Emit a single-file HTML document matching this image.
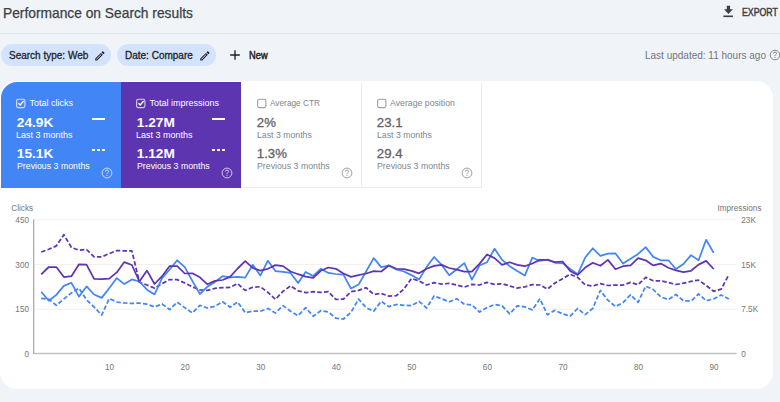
<!DOCTYPE html>
<html><head><meta charset="utf-8"><style>
*{margin:0;padding:0;box-sizing:border-box}
html,body{width:780px;height:402px;overflow:hidden;background:#f0f4f9;font-family:"Liberation Sans",sans-serif;position:relative}
.a{position:absolute;white-space:nowrap;line-height:1}
#card{position:absolute;left:0;top:81px;width:773px;height:308px;background:#fff;border-radius:17px;overflow:hidden}
.tile{position:absolute;top:82px;height:105px}
.lbl{font-size:9px}
.big{font-size:13.4px;font-weight:bold}
.sub{font-size:9px}
</style></head><body>
<div class="a " style="left:3.2px;top:6.5px;font-size:13.9px;color:#3c4043;-webkit-text-stroke:0.25px #3c4043;transform:scaleX(0.992);transform-origin:0 0">Performance on Search results</div>
<div class="a" style="left:0;top:33px;width:780px;height:1px;background:#e2e6ea"></div>
<div class="a" style="left:1px;top:44px;width:110px;height:22px;border-radius:11px;background:#d3e3fd"></div>
<div class="a" style="left:117px;top:44px;width:99px;height:22px;border-radius:11px;background:#d3e3fd"></div>
<div class="a " style="left:9px;top:51px;font-size:10px;color:#1f1f1f;-webkit-text-stroke:0.3px #1f1f1f">Search type: Web</div>
<div class="a " style="left:125px;top:51px;font-size:10px;color:#1f1f1f;-webkit-text-stroke:0.3px #1f1f1f">Date: Compare</div>
<svg class="a" style="left:94.7px;top:50.6px" width="10" height="10" viewBox="2.5 2.5 19.5 19.5"><path d="M3 17.25V21h3.75L17.81 9.94l-3.75-3.75L3 17.25zM5.92 19H5v-.92l9.06-9.06.92.92L5.92 19zM20.71 5.63l-2.34-2.34c-.2-.2-.45-.29-.71-.29s-.51.1-.7.29l-1.83 1.83 3.75 3.75 1.83-1.83c.39-.39.39-1.02 0-1.41z" fill="#1f1f1f"/></svg>
<svg class="a" style="left:199.7px;top:50.6px" width="10" height="10" viewBox="2.5 2.5 19.5 19.5"><path d="M3 17.25V21h3.75L17.81 9.94l-3.75-3.75L3 17.25zM5.92 19H5v-.92l9.06-9.06.92.92L5.92 19zM20.71 5.63l-2.34-2.34c-.2-.2-.45-.29-.71-.29s-.51.1-.7.29l-1.83 1.83 3.75 3.75 1.83-1.83c.39-.39.39-1.02 0-1.41z" fill="#1f1f1f"/></svg>
<svg class="a" style="left:229px;top:49px" width="12" height="12" viewBox="0 0 12 12"><path d="M6 1.2V10.8M1.2 6H10.8" stroke="#1f1f1f" stroke-width="1.35"/></svg>
<div class="a " style="left:248.7px;top:51px;font-size:10px;color:#1f1f1f;-webkit-text-stroke:0.45px #1f1f1f;transform:scaleX(0.93);transform-origin:0 0">New</div>
<svg class="a" style="left:722px;top:5px" width="12" height="13" viewBox="0 0 12 13"><path d="M4.8 0.8H8.1V4.3H10.9L6.45 9L2 4.3H4.8Z" fill="#3c4043"/><rect x="1.4" y="10.5" width="9.5" height="1.6" fill="#3c4043"/></svg>
<div class="a " style="left:741.8px;top:8.2px;font-size:10px;color:#3c4043;-webkit-text-stroke:0.45px #3c4043;transform:scaleX(0.875);transform-origin:0 0">EXPORT</div>
<div class="a " style="left:645.3px;top:50.5px;font-size:10.1px;color:#70757a;transform:scaleX(0.99);transform-origin:0 0">Last updated: 11 hours ago</div>
<svg class="a" style="left:767.7px;top:47.6px" width="14" height="14" viewBox="0 0 14 14"><circle cx="7" cy="7" r="4.8" fill="none" stroke="#80868b" stroke-width="1"/><path d="M5.4 5.6 Q5.4 4.1 7 4.1 Q8.6 4.1 8.6 5.5 Q8.6 6.3 7.6 6.8 Q7 7.2 7 8.2" fill="none" stroke="#80868b" stroke-width="1"/><rect x="6.5" y="9" width="1" height="1" fill="#80868b"/></svg>
<div id="card"></div>
<div class="a" style="left:1px;top:82px;width:120px;height:106px;background:#4285f4;border-top-left-radius:16px;"></div>
<svg class="a" style="left:15px;top:97px" width="12" height="12" viewBox="0 0 12 12"><rect x="1.6" y="2.3" width="8.3" height="8.3" rx="1.6" fill="none" stroke="rgba(255,255,255,0.75)" stroke-width="1.1"/><path d="M3.4 6.3 L5.2 8 L8.6 4" fill="none" stroke="#fff" stroke-width="1.3"/></svg>
<div class="a " style="left:29.5px;top:99px;font-size:9px;color:#fff">Total clicks</div>
<div class="a " style="left:16.8px;top:115.6px;font-size:13.7px;font-weight:bold;color:#fff">24.9K</div>
<div class="a " style="left:16px;top:131px;font-size:9px;color:#fff">Last 3 months</div>
<div class="a " style="left:16.8px;top:146.6px;font-size:13.7px;font-weight:bold;color:#fff">15.1K</div>
<div class="a " style="left:16.5px;top:162px;font-size:9px;color:#fff;transform:scaleX(0.975);transform-origin:0 0">Previous 3 months</div>
<svg class="a" style="left:100.4px;top:166px" width="14" height="14" viewBox="0 0 14 14"><circle cx="7" cy="7" r="4.9" fill="none" stroke="rgba(255,255,255,0.7)" stroke-width="1"/><path d="M5.4 5.6 Q5.4 4.1 7 4.1 Q8.6 4.1 8.6 5.5 Q8.6 6.3 7.6 6.8 Q7 7.2 7 8.2" fill="none" stroke="rgba(255,255,255,0.7)" stroke-width="1"/><rect x="6.5" y="9" width="1" height="1" fill="rgba(255,255,255,0.7)"/></svg>
<div class="a" style="left:92px;top:118px;width:13px;height:2px;background:#fff"></div>
<div class="a" style="left:92.0px;top:149px;width:3px;height:2px;background:#fff"></div>
<div class="a" style="left:96.75px;top:149px;width:3px;height:2px;background:#fff"></div>
<div class="a" style="left:101.5px;top:149px;width:3px;height:2px;background:#fff"></div>
<div class="a" style="left:121px;top:82px;width:120px;height:106px;background:#5e35b1;"></div>
<svg class="a" style="left:135px;top:97px" width="12" height="12" viewBox="0 0 12 12"><rect x="1.6" y="2.3" width="8.3" height="8.3" rx="1.6" fill="none" stroke="rgba(255,255,255,0.75)" stroke-width="1.1"/><path d="M3.4 6.3 L5.2 8 L8.6 4" fill="none" stroke="#fff" stroke-width="1.3"/></svg>
<div class="a " style="left:149.5px;top:99px;font-size:9px;color:#fff">Total impressions</div>
<div class="a " style="left:136.8px;top:115.6px;font-size:13.7px;font-weight:bold;color:#fff">1.27M</div>
<div class="a " style="left:136px;top:131px;font-size:9px;color:#fff">Last 3 months</div>
<div class="a " style="left:136.8px;top:146.6px;font-size:13.7px;font-weight:bold;color:#fff">1.12M</div>
<div class="a " style="left:136.5px;top:162px;font-size:9px;color:#fff;transform:scaleX(0.975);transform-origin:0 0">Previous 3 months</div>
<svg class="a" style="left:220.4px;top:166px" width="14" height="14" viewBox="0 0 14 14"><circle cx="7" cy="7" r="4.9" fill="none" stroke="rgba(255,255,255,0.7)" stroke-width="1"/><path d="M5.4 5.6 Q5.4 4.1 7 4.1 Q8.6 4.1 8.6 5.5 Q8.6 6.3 7.6 6.8 Q7 7.2 7 8.2" fill="none" stroke="rgba(255,255,255,0.7)" stroke-width="1"/><rect x="6.5" y="9" width="1" height="1" fill="rgba(255,255,255,0.7)"/></svg>
<div class="a" style="left:212px;top:118px;width:13px;height:2px;background:#fff"></div>
<div class="a" style="left:212.0px;top:149px;width:3px;height:2px;background:#fff"></div>
<div class="a" style="left:216.75px;top:149px;width:3px;height:2px;background:#fff"></div>
<div class="a" style="left:221.5px;top:149px;width:3px;height:2px;background:#fff"></div>
<div class="a" style="left:241px;top:82px;width:121px;height:106px;border-right:1px solid #ebebeb;border-bottom:1px solid #ebebeb"></div>
<svg class="a" style="left:255.6px;top:97px" width="12" height="12" viewBox="0 0 12 12"><rect x="1.6" y="2.3" width="8.3" height="8.3" rx="1.6" fill="none" stroke="#9aa0a6" stroke-width="1.1"/></svg>
<div class="a " style="left:269.5px;top:99px;font-size:9px;color:#80868b;transform:scaleX(0.92);transform-origin:0 0">Average CTR</div>
<div class="a " style="left:256.8px;top:115.6px;font-size:13.2px;color:#5f6368;-webkit-text-stroke:0.3px #5f6368">2%</div>
<div class="a " style="left:257.2px;top:131px;font-size:9px;color:#80868b;transform:scaleX(0.97);transform-origin:0 0">Last 3 months</div>
<div class="a " style="left:256.8px;top:146.6px;font-size:13.2px;color:#5f6368;-webkit-text-stroke:0.3px #5f6368">1.3%</div>
<div class="a " style="left:256.5px;top:162px;font-size:9px;color:#80868b;transform:scaleX(0.975);transform-origin:0 0">Previous 3 months</div>
<svg class="a" style="left:340.4px;top:166px" width="14" height="14" viewBox="0 0 14 14"><circle cx="7" cy="7" r="4.9" fill="none" stroke="#9aa0a6" stroke-width="1"/><path d="M5.4 5.6 Q5.4 4.1 7 4.1 Q8.6 4.1 8.6 5.5 Q8.6 6.3 7.6 6.8 Q7 7.2 7 8.2" fill="none" stroke="#9aa0a6" stroke-width="1"/><rect x="6.5" y="9" width="1" height="1" fill="#9aa0a6"/></svg>
<div class="a" style="left:362px;top:82px;width:120px;height:106px;border-right:1px solid #ebebeb;border-bottom:1px solid #ebebeb"></div>
<svg class="a" style="left:375.6px;top:97px" width="12" height="12" viewBox="0 0 12 12"><rect x="1.6" y="2.3" width="8.3" height="8.3" rx="1.6" fill="none" stroke="#9aa0a6" stroke-width="1.1"/></svg>
<div class="a " style="left:389.5px;top:99px;font-size:9px;color:#80868b;transform:scaleX(0.97);transform-origin:0 0">Average position</div>
<div class="a " style="left:376.8px;top:115.6px;font-size:13.2px;color:#5f6368;-webkit-text-stroke:0.3px #5f6368">23.1</div>
<div class="a " style="left:377.2px;top:131px;font-size:9px;color:#80868b;transform:scaleX(0.97);transform-origin:0 0">Last 3 months</div>
<div class="a " style="left:376.8px;top:146.6px;font-size:13.2px;color:#5f6368;-webkit-text-stroke:0.3px #5f6368">29.4</div>
<div class="a " style="left:376.5px;top:162px;font-size:9px;color:#80868b;transform:scaleX(0.975);transform-origin:0 0">Previous 3 months</div>
<svg class="a" style="left:460.4px;top:166px" width="14" height="14" viewBox="0 0 14 14"><circle cx="7" cy="7" r="4.9" fill="none" stroke="#9aa0a6" stroke-width="1"/><path d="M5.4 5.6 Q5.4 4.1 7 4.1 Q8.6 4.1 8.6 5.5 Q8.6 6.3 7.6 6.8 Q7 7.2 7 8.2" fill="none" stroke="#9aa0a6" stroke-width="1"/><rect x="6.5" y="9" width="1" height="1" fill="#9aa0a6"/></svg>
<svg class="a" style="left:0;top:0" width="780" height="402" viewBox="0 0 780 402">
<line x1="33.5" y1="219.7" x2="736.5" y2="219.7" stroke="#f0f0f0" stroke-width="1"/>
<line x1="33.5" y1="264.4" x2="736.5" y2="264.4" stroke="#f0f0f0" stroke-width="1"/>
<line x1="33.5" y1="309.2" x2="736.5" y2="309.2" stroke="#f0f0f0" stroke-width="1"/>
<line x1="33.5" y1="353.5" x2="736.5" y2="353.5" stroke="#c2c2c2" stroke-width="1.3"/>
<line x1="33.7" y1="219.5" x2="33.7" y2="354" stroke="#a6a6a6" stroke-width="1.2"/>
<text transform="translate(11.30,211.30) scale(0.93,1)" text-anchor="start" style="font-family:Liberation Sans,sans-serif;font-size:8.8px;fill:#757575">Clicks</text>
<text transform="translate(761.50,211.30) scale(0.93,1)" text-anchor="end" style="font-family:Liberation Sans,sans-serif;font-size:8.8px;fill:#757575">Impressions</text>
<text transform="translate(29.00,223.00) scale(0.93,1)" text-anchor="end" style="font-family:Liberation Sans,sans-serif;font-size:8.8px;fill:#757575">450</text>
<text transform="translate(29.00,267.60) scale(0.93,1)" text-anchor="end" style="font-family:Liberation Sans,sans-serif;font-size:8.8px;fill:#757575">300</text>
<text transform="translate(29.00,312.40) scale(0.93,1)" text-anchor="end" style="font-family:Liberation Sans,sans-serif;font-size:8.8px;fill:#757575">150</text>
<text transform="translate(29.00,356.60) scale(0.93,1)" text-anchor="end" style="font-family:Liberation Sans,sans-serif;font-size:8.8px;fill:#757575">0</text>
<text transform="translate(741.30,223.00) scale(0.93,1)" text-anchor="start" style="font-family:Liberation Sans,sans-serif;font-size:8.8px;fill:#757575">23K</text>
<text transform="translate(741.30,267.60) scale(0.93,1)" text-anchor="start" style="font-family:Liberation Sans,sans-serif;font-size:8.8px;fill:#757575">15K</text>
<text transform="translate(741.30,312.40) scale(0.93,1)" text-anchor="start" style="font-family:Liberation Sans,sans-serif;font-size:8.8px;fill:#757575">7.5K</text>
<text transform="translate(741.30,356.60) scale(0.93,1)" text-anchor="start" style="font-family:Liberation Sans,sans-serif;font-size:8.8px;fill:#757575">0</text>
<text transform="translate(109.60,370.20) scale(0.93,1)" text-anchor="middle" style="font-family:Liberation Sans,sans-serif;font-size:8.8px;fill:#757575">10</text>
<text transform="translate(185.16,370.20) scale(0.93,1)" text-anchor="middle" style="font-family:Liberation Sans,sans-serif;font-size:8.8px;fill:#757575">20</text>
<text transform="translate(260.72,370.20) scale(0.93,1)" text-anchor="middle" style="font-family:Liberation Sans,sans-serif;font-size:8.8px;fill:#757575">30</text>
<text transform="translate(336.28,370.20) scale(0.93,1)" text-anchor="middle" style="font-family:Liberation Sans,sans-serif;font-size:8.8px;fill:#757575">40</text>
<text transform="translate(411.84,370.20) scale(0.93,1)" text-anchor="middle" style="font-family:Liberation Sans,sans-serif;font-size:8.8px;fill:#757575">50</text>
<text transform="translate(487.40,370.20) scale(0.93,1)" text-anchor="middle" style="font-family:Liberation Sans,sans-serif;font-size:8.8px;fill:#757575">60</text>
<text transform="translate(562.96,370.20) scale(0.93,1)" text-anchor="middle" style="font-family:Liberation Sans,sans-serif;font-size:8.8px;fill:#757575">70</text>
<text transform="translate(638.52,370.20) scale(0.93,1)" text-anchor="middle" style="font-family:Liberation Sans,sans-serif;font-size:8.8px;fill:#757575">80</text>
<text transform="translate(714.08,370.20) scale(0.93,1)" text-anchor="middle" style="font-family:Liberation Sans,sans-serif;font-size:8.8px;fill:#757575">90</text>
<path d="M41.20 298.30 L48.76 299.30 L56.31 305.30 L63.87 298.90 L71.42 292.90 L78.98 288.20 L86.54 299.90 L94.09 307.00 L101.65 315.10 L109.20 298.50 L116.76 302.00 L124.32 303.00 L131.87 303.40 L139.43 303.10 L146.98 304.20 L154.54 306.90 L162.10 304.00 L169.65 309.60 L177.21 302.20 L184.76 307.60 L192.32 313.00 L199.88 305.30 L207.43 308.00 L214.99 306.20 L222.54 301.80 L230.10 307.20 L237.66 302.00 L245.21 312.60 L252.77 311.20 L260.32 311.20 L267.88 308.50 L275.44 313.00 L282.99 305.60 L290.55 311.20 L298.10 315.70 L305.66 307.60 L313.22 316.30 L320.77 310.70 L328.33 312.00 L335.88 318.20 L343.44 319.00 L351.00 312.30 L358.55 299.10 L366.11 307.60 L373.66 311.20 L381.22 301.30 L388.78 306.60 L396.33 304.50 L403.89 305.30 L411.44 305.60 L419.00 301.30 L426.56 308.00 L434.11 296.00 L441.67 298.80 L449.22 301.80 L456.78 298.80 L464.34 304.20 L471.89 304.90 L479.45 312.00 L487.00 307.60 L494.56 304.50 L502.12 305.80 L509.67 313.90 L517.23 305.80 L524.78 306.90 L532.34 309.90 L539.90 298.80 L547.45 314.70 L555.01 310.30 L562.56 313.90 L570.12 316.10 L577.68 308.50 L585.23 314.70 L592.79 308.30 L600.34 290.50 L607.90 300.20 L615.46 306.60 L623.01 302.60 L630.57 294.80 L638.12 302.30 L645.68 286.20 L653.24 289.50 L660.79 296.90 L668.35 299.60 L675.90 294.50 L683.46 300.70 L691.02 301.00 L698.57 294.00 L706.13 300.70 L713.68 298.90 L721.24 294.90 L728.80 298.90" fill="none" stroke="#4285f4" stroke-width="1.75" stroke-dasharray="4.5 2.2" stroke-linejoin="round"/>
<path d="M41.20 252.00 L48.76 249.30 L56.31 245.90 L63.87 234.70 L71.42 247.50 L78.98 250.20 L86.54 249.50 L94.09 256.90 L101.65 256.90 L109.20 253.60 L116.76 250.60 L124.32 250.90 L131.87 250.90 L139.43 282.30 L146.98 285.00 L154.54 288.10 L162.10 283.60 L169.65 279.60 L177.21 279.60 L184.76 283.00 L192.32 286.70 L199.88 290.00 L207.43 290.40 L214.99 288.30 L222.54 287.70 L230.10 287.30 L237.66 283.60 L245.21 290.40 L252.77 287.30 L260.32 286.70 L267.88 292.40 L275.44 299.40 L282.99 291.30 L290.55 285.90 L298.10 290.80 L305.66 292.60 L313.22 291.70 L320.77 292.40 L328.33 291.70 L335.88 299.40 L343.44 299.10 L351.00 291.70 L358.55 290.40 L366.11 287.70 L373.66 294.40 L381.22 293.50 L388.78 296.10 L396.33 295.70 L403.89 289.00 L411.44 278.60 L419.00 280.90 L426.56 285.00 L434.11 282.70 L441.67 284.10 L449.22 283.30 L456.78 285.00 L464.34 287.10 L471.89 284.40 L479.45 285.00 L487.00 282.40 L494.56 284.40 L502.12 283.70 L509.67 286.00 L517.23 288.10 L524.78 286.80 L532.34 284.60 L539.90 285.00 L547.45 289.10 L555.01 283.00 L562.56 278.70 L570.12 274.30 L577.68 277.40 L585.23 285.00 L592.79 286.00 L600.34 283.70 L607.90 285.50 L615.46 285.00 L623.01 285.00 L630.57 282.40 L638.12 284.70 L645.68 277.40 L653.24 280.80 L660.79 280.80 L668.35 282.40 L675.90 284.50 L683.46 283.20 L691.02 281.40 L698.57 280.10 L706.13 285.50 L713.68 291.30 L721.24 289.10 L728.80 274.70" fill="none" stroke="#5e35b1" stroke-width="1.75" stroke-dasharray="4.5 2.2" stroke-linejoin="round"/>
<path d="M41.20 291.80 L48.76 300.70 L56.31 294.90 L63.87 285.90 L71.42 282.80 L78.98 296.60 L86.54 286.40 L94.09 294.50 L101.65 297.90 L109.20 288.20 L116.76 278.10 L124.32 284.10 L131.87 279.40 L139.43 281.50 L146.98 289.70 L154.54 294.40 L162.10 278.20 L169.65 269.50 L177.21 260.30 L184.76 267.10 L192.32 280.90 L199.88 294.00 L207.43 286.70 L214.99 281.90 L222.54 276.20 L230.10 277.30 L237.66 276.90 L245.21 277.60 L252.77 264.80 L260.32 275.60 L267.88 260.70 L275.44 271.10 L282.99 271.90 L290.55 272.90 L298.10 283.00 L305.66 271.90 L313.22 276.00 L320.77 268.80 L328.33 272.90 L335.88 274.00 L343.44 274.60 L351.00 288.60 L358.55 284.60 L366.11 271.50 L373.66 258.10 L381.22 267.10 L388.78 265.50 L396.33 269.50 L403.89 271.50 L411.44 275.10 L419.00 279.60 L426.56 267.10 L434.11 257.00 L441.67 264.90 L449.22 275.20 L456.78 269.30 L464.34 263.10 L471.89 279.70 L479.45 265.50 L487.00 262.20 L494.56 248.70 L502.12 259.90 L509.67 266.20 L517.23 270.90 L524.78 275.60 L532.34 257.70 L539.90 260.80 L547.45 259.50 L555.01 262.80 L562.56 263.10 L570.12 268.90 L577.68 274.30 L585.23 257.50 L592.79 248.30 L600.34 255.80 L607.90 253.70 L615.46 253.40 L623.01 263.50 L630.57 258.80 L638.12 253.90 L645.68 247.10 L653.24 256.90 L660.79 260.30 L668.35 260.30 L675.90 269.00 L683.46 264.00 L691.02 255.10 L698.57 260.30 L706.13 239.80 L713.68 252.90" fill="none" stroke="#4285f4" stroke-width="1.75" stroke-linejoin="round"/>
<path d="M41.20 274.40 L48.76 267.00 L56.31 267.00 L63.87 277.10 L71.42 276.20 L78.98 264.30 L86.54 264.60 L94.09 278.90 L101.65 279.10 L109.20 278.60 L116.76 272.40 L124.32 262.10 L131.87 265.00 L139.43 281.50 L146.98 270.60 L154.54 284.00 L162.10 276.20 L169.65 266.10 L177.21 266.10 L184.76 273.50 L192.32 273.30 L199.88 277.30 L207.43 284.30 L214.99 280.90 L222.54 280.00 L230.10 276.90 L237.66 268.50 L245.21 261.20 L252.77 267.90 L260.32 270.60 L267.88 268.80 L275.44 265.10 L282.99 266.10 L290.55 271.50 L298.10 274.20 L305.66 276.60 L313.22 277.80 L320.77 270.80 L328.33 267.50 L335.88 268.80 L343.44 273.50 L351.00 276.90 L358.55 275.10 L366.11 273.50 L373.66 271.20 L381.22 271.50 L388.78 265.50 L396.33 268.80 L403.89 269.20 L411.44 270.80 L419.00 273.30 L426.56 268.80 L434.11 265.90 L441.67 264.90 L449.22 268.00 L456.78 269.60 L464.34 271.60 L471.89 271.60 L479.45 263.90 L487.00 254.50 L494.56 258.10 L502.12 264.90 L509.67 262.20 L517.23 264.90 L524.78 266.20 L532.34 263.50 L539.90 259.90 L547.45 259.90 L555.01 262.20 L562.56 261.50 L570.12 270.90 L577.68 275.00 L585.23 267.60 L592.79 262.80 L600.34 265.80 L607.90 259.90 L615.46 269.30 L623.01 266.20 L630.57 265.30 L638.12 258.10 L645.68 260.30 L653.24 265.40 L660.79 263.60 L668.35 267.70 L675.90 270.40 L683.46 272.10 L691.02 270.80 L698.57 264.60 L706.13 260.90 L713.68 269.00" fill="none" stroke="#5e35b1" stroke-width="1.75" stroke-linejoin="round"/>
</svg>
</body></html>
